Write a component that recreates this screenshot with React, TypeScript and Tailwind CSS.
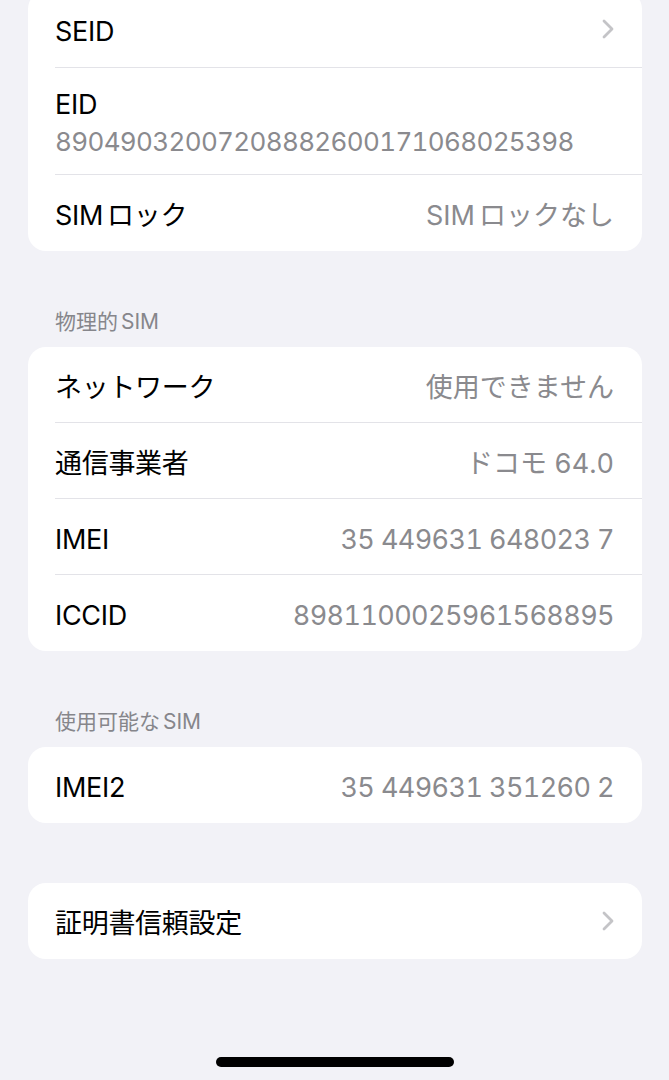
import React from "react";

const FONT = { fontFamily: '"Inter", "Noto Sans CJK JP", sans-serif' };

function Chevron() {
  return (
    <svg width="12" height="20" viewBox="0 0 12 20" className="shrink-0 -mt-[7px]">
      <path d="M2 2 L10 10 L2 18" fill="none" stroke="#c4c4c7" strokeWidth="2.8" strokeLinecap="round" strokeLinejoin="round" />
    </svg>
  );
}

function Row({
  label,
  value,
  chevron,
  last,
  numeric,
  h = "h-[76px]",
}: {
  label: React.ReactNode;
  value?: React.ReactNode;
  chevron?: boolean;
  last?: boolean;
  numeric?: boolean;
  h?: string;
}) {
  return (
    <div className="pl-[27px]">
      <div className={`flex items-center justify-between pr-[28px] pt-[7px] ${h} ${last ? "" : "border-b border-[#e3e3e8]"}`}>
        <span className="text-[27px] text-black tracking-[-0.3px]">{label}</span>
        {value && (
          <span className={`text-[27px] text-[#8a8a8e] tabular-nums ${numeric ? "tracking-[-0.6px]" : "tracking-[0px]"}`}>
            {value}
          </span>
        )}
        {chevron && <Chevron />}
      </div>
    </div>
  );
}

function Card({ children, className = "" }: { children: React.ReactNode; className?: string }) {
  return <div className={`mr-[27px] ml-[28px] bg-white rounded-[18px] overflow-hidden ${className}`}>{children}</div>;
}

function Header({ children }: { children: React.ReactNode }) {
  return (
    <div className="pl-[55px] pt-[58px] pb-[12px] text-[21px] leading-[26px] text-[#86868b]">{children}</div>
  );
}

export default function App() {
  return (
    <div className="min-h-[1080px] bg-[#f2f2f7] flex flex-col overflow-hidden" style={FONT}>
      <Card className="-mt-[9px]">
        <Row label="SEID" chevron h="h-[77px]" />
        <div className="pl-[27px]">
          <div className="pt-[20px] pb-[15px] pr-[28px] border-b border-[#e3e3e8]">
            <div className="text-[27px] leading-[34px] text-black tracking-[-0.3px]">EID</div>
            <div className="mt-[3px] text-[26px] leading-[34px] text-[#8a8a8e] tabular-nums tracking-[-0.65px]">
              89049032007208882600171068025398
            </div>
          </div>
        </div>
        <Row
          label={
            <>
              SIM<span className="ml-[4px]">ロック</span>
            </>
          }
          value={
            <>
              SIM<span className="ml-[4px]">ロックなし</span>
            </>
          }
          last
        />
      </Card>

      <Header>
        物理的<span className="ml-[3px]">SIM</span>
      </Header>
      <Card>
        <Row label="ネットワーク" value="使用できません" />
        <Row label="通信事業者" value="ドコモ 64.0" />
        <Row label="IMEI" value="35 449631 648023 7" numeric />
        <Row label="ICCID" value="8981100025961568895" numeric last />
      </Card>

      <Header>
        使用可能な<span className="ml-[3px]">SIM</span>
      </Header>
      <Card>
        <Row label="IMEI2" value="35 449631 351260 2" numeric last />
      </Card>

      <Card className="mt-[60px]">
        <Row label="証明書信頼設定" chevron last />
      </Card>

      <div className="mt-[98px] flex justify-center">
        <div className="w-[238px] h-[10px] rounded-full bg-black" />
      </div>
    </div>
  );
}
